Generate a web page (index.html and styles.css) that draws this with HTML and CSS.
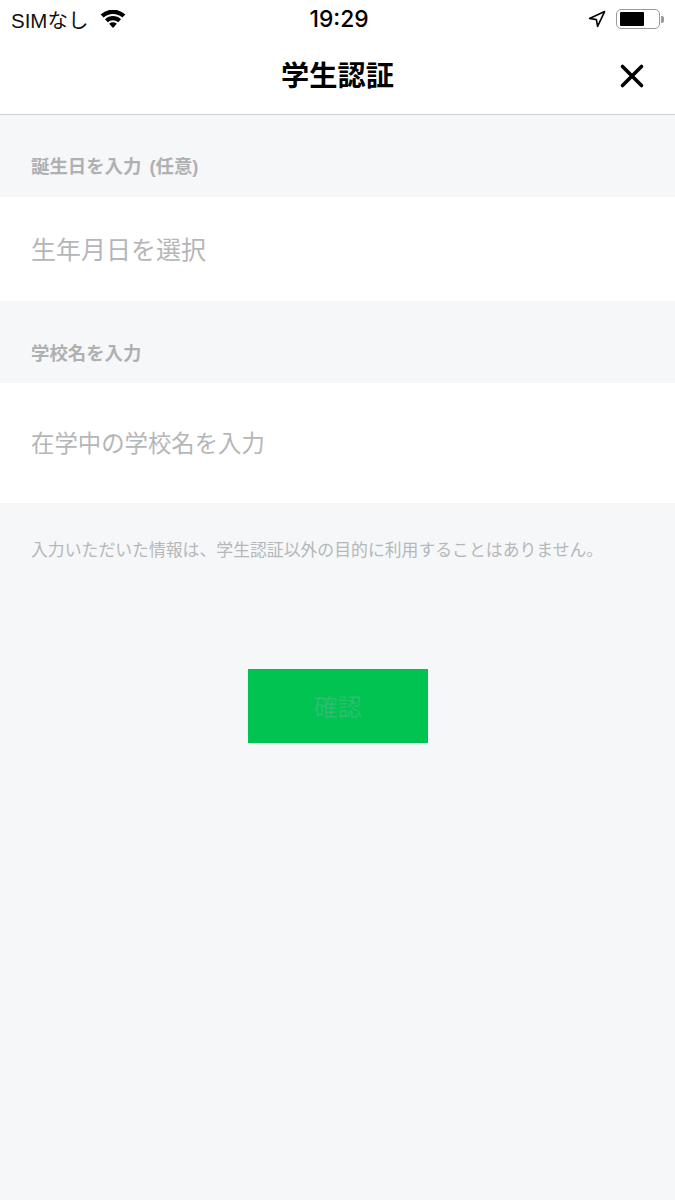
FILE: index.html
```html
<!DOCTYPE html>
<html lang="ja">
<head>
    <meta charset="utf-8">
    <meta name="viewport" content="width=device-width,initial-scale=1">
    <title>学生認証</title>
    <link rel="stylesheet" href="styles.css">
</head>
<body>
    <div class="status-bar">
        <div class="status-left">
            <span class="carrier">SIMなし</span>
            <svg class="wifi" width="26" height="19" viewBox="0 0 26 19">
                <path d="M13 18 L9.2 13.8 A5.6 5.6 0 0 1 16.8 13.8 Z" fill="#000"/>
                <path d="M7.8 12.2 L5 9.2 A11.8 11.8 0 0 1 21 9.2 L18.2 12.2 A7.8 7.8 0 0 0 7.8 12.2 Z" fill="#000"/>
                <path d="M3.6 7.6 L0.6 4.6 A18 18 0 0 1 25.4 4.6 L22.4 7.6 A14 14 0 0 0 3.6 7.6 Z" fill="#000"/>
            </svg>
        </div>
        <div class="status-time">19:29</div>
        <div class="status-right">
            <svg class="location" width="18" height="18" viewBox="0 0 18 18">
                <path d="M16.6 1.6 L1.6 8.4 L8.4 9.6 L9.6 16.4 Z" fill="none" stroke="#000" stroke-width="1.6" stroke-linejoin="round"/>
            </svg>
            <div class="battery"><div class="battery-level"></div></div>
            <div class="battery-tip"></div>
        </div>
    </div>

    <header class="nav-bar">
        <h1 class="nav-title">学生認証</h1>
        <svg class="close-icon" width="26" height="26" viewBox="0 0 26 26">
            <path d="M3.5 3.5 L22.5 22.5 M22.5 3.5 L3.5 22.5" stroke="#000" stroke-width="3.6" stroke-linecap="round"/>
        </svg>
    </header>

    <main>
        <h2 class="section-label first">誕生日を入力 (任意)</h2>
        <div class="field birthday">生年月日を選択</div>

        <h2 class="section-label">学校名を入力</h2>
        <div class="field school">在学中の学校名を入力</div>

        <p class="note">入力いただいた情報は、学生認証以外の目的に利用することはありません。</p>

        <div class="button-row">
            <button class="confirm" type="button">確認</button>
        </div>
    </main>
</body>
</html>
```

FILE: styles.css
```css
* {
    font-family: "Liberation Sans", "Noto Sans CJK JP", sans-serif;
    box-sizing: border-box;
}

html,
body {
    height: 100%;
}

body {
    margin: 0;
    min-height: 1200px;
    background-color: #f6f7f9;
    color: #000000;
}

.status-bar {
    display: flex;
    align-items: center;
    justify-content: space-between;
    height: 38px;
    padding: 0 11px 0 11px;
    background-color: #ffffff;
    position: relative;
}

.status-left {
    display: flex;
    align-items: center;
    gap: 12px;
}

.carrier {
    font-size: 20.5px;
    color: #111111;
}

.wifi {
    display: block;
}

.status-time {
    position: absolute;
    left: 3px;
    right: 0;
    padding-bottom: 2px;
    text-align: center;
    font-size: 22.8px;
    font-weight: 500;
    font-family: "Inter", "Liberation Sans", sans-serif;
}

.status-right {
    display: flex;
    align-items: center;
}

.location {
    margin-right: 10px;
}

.battery {
    width: 44px;
    height: 20px;
    padding: 2px 3px;
    border: 1.5px solid #9a9a9a;
    border-radius: 5px;
}

.battery-level {
    width: 24px;
    height: 100%;
    background-color: #000000;
    border-radius: 1px;
}

.battery-tip {
    width: 3px;
    height: 7px;
    margin-left: 1px;
    background-color: #9a9a9a;
    border-radius: 0 2px 2px 0;
}

.nav-bar {
    display: flex;
    align-items: center;
    justify-content: center;
    height: 77px;
    padding-top: 1px;
    background-color: #ffffff;
    border-bottom: 1px solid #cfd1d3;
    position: relative;
}

.nav-title {
    margin: 0;
    font-size: 28.2px;
    font-weight: 700;
    line-height: 1.2;
}

.close-icon {
    position: absolute;
    right: 30px;
    top: 25px;
}

.section-label {
    margin: 0;
    height: 82px;
    padding: 41px 0 0 31px;
    font-size: 18.4px;
    font-weight: 700;
    line-height: 24px;
    word-spacing: 3px;
    color: #aeb0b2;
}

.section-label.first {
    padding-top: 40px;
}

.field {
    display: flex;
    align-items: center;
    padding-left: 31px;
    padding-bottom: 2px;
    background-color: #ffffff;
    font-size: 25px;
    color: #b5b6b8;
}

.birthday {
    height: 104px;
}

.school {
    height: 120px;
    font-size: 23.4px;
}

.note {
    margin: 0;
    padding: 36px 31px 0 31px;
    font-size: 16.85px;
    line-height: 24px;
    color: #b5b7b9;
    white-space: nowrap;
}

.button-row {
    display: flex;
    justify-content: center;
    padding-top: 106px;
}

.confirm {
    width: 180px;
    height: 74px;
    border: 0;
    padding: 0 0 2px 0;
    background-color: #00c352;
    font-size: 24px;
    color: #2dbd6e;
}
```
